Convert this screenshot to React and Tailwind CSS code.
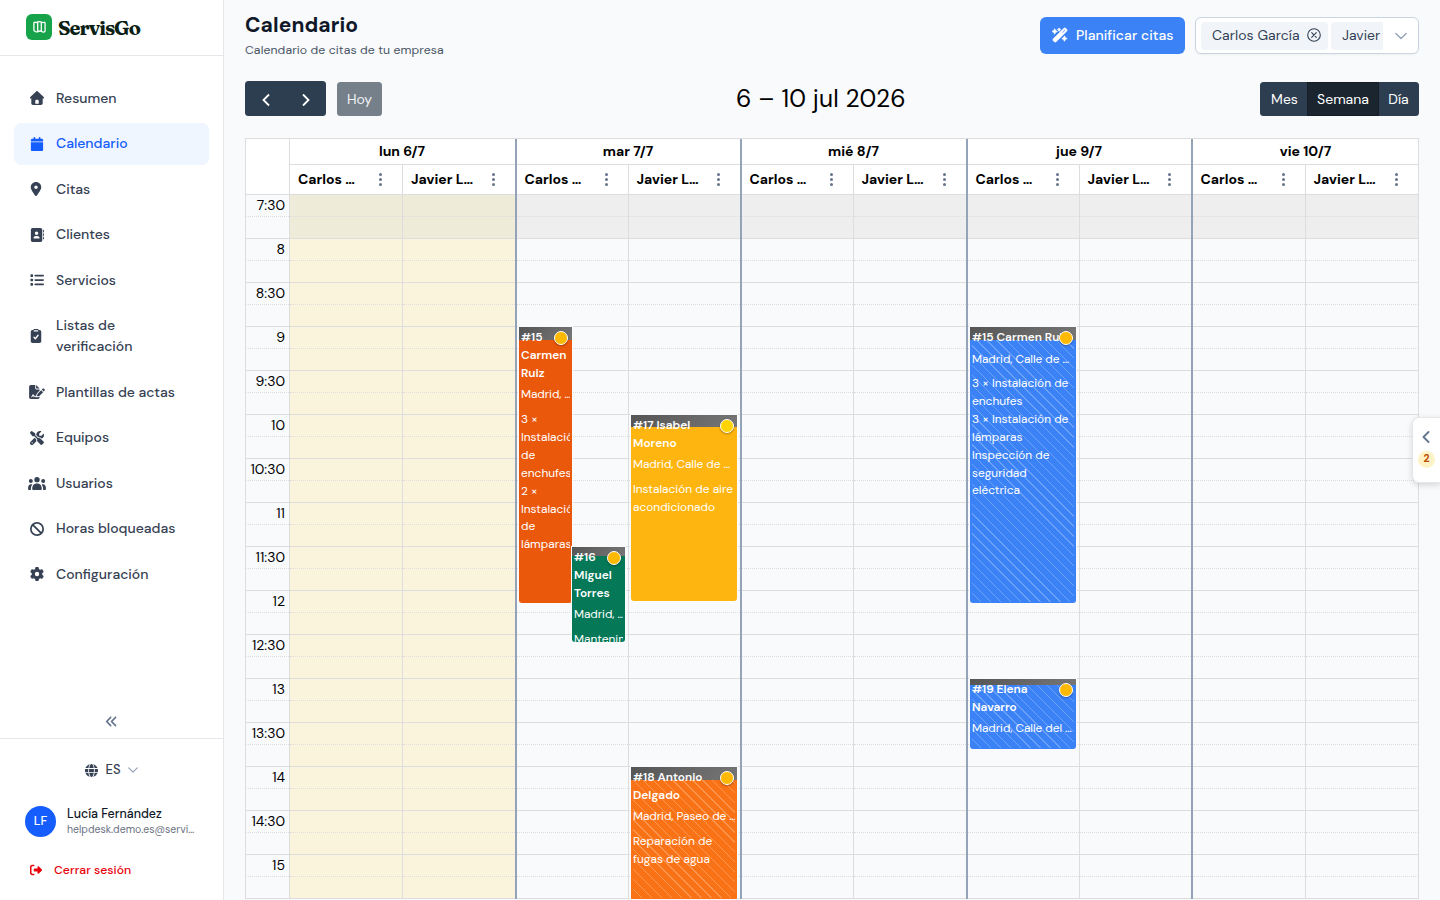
import clsx from 'clsx';
import {
    FaAddressBook, FaAnglesLeft, FaBan, FaCalendar, FaFileSignature, FaGear, FaGlobe,
    FaList, FaLocationDot, FaRightFromBracket, FaScrewdriverWrench, FaWandMagicSparkles,
} from 'react-icons/fa6';

const NAV = [
    { label: 'Resumen', icon: HouseIcon, size: 'h-3.5 w-3.5' },
    { label: 'Calendario', icon: FaCalendar, size: 'h-3.5 w-3.5', active: true },
    { label: 'Citas', icon: FaLocationDot, size: 'h-3.5 w-3.5 -translate-x-px' },
    { label: 'Clientes', icon: FaAddressBook, size: 'h-3.5 w-3.5' },
    { label: 'Servicios', icon: FaList, size: 'h-3.5 w-3.5' },
    { label: 'Listas de verificación', icon: ClipboardIcon, size: 'h-3.5 w-3.5 -translate-x-px' },
    { label: 'Plantillas de actas', icon: FaFileSignature, size: 'h-3.5 w-4' },
    { label: 'Equipos', icon: FaScrewdriverWrench, size: 'h-3.5 w-3.5' },
    { label: 'Usuarios', icon: UsersIcon, size: 'h-[13px] w-[18px]' },
    { label: 'Horas bloqueadas', icon: FaBan, size: 'h-3.5 w-3.5' },
    { label: 'Configuración', icon: FaGear, size: 'h-3.5 w-3.5' },
];

const TIMES = ['7:30', '8', '8:30', '9', '9:30', '10', '10:30', '11', '11:30', '12', '12:30', '13', '13:30', '14', '14:30', '15'];

const DAYS = [
    { label: 'lun 6/7', width: 'w-[225px]', first: 'w-[113px]', blocked: true, events: [[], []] },
    {
        label: 'mar 7/7', width: 'w-[225px]', first: 'w-[112px]', divider: true,
        events: [
            [
                {
                    box: 'left-[2px] top-[133px] h-[276px] w-[53px] bg-[#ea580c]', bar: 'h-[13px]', dot: 'right-1 bg-[#ffb900]',
                    title: ['#15', 'Carmen', 'Ruiz'], place: 'Madrid, …',
                    lines: ['3 ×', 'Instalación', 'de', 'enchufes', '2 ×', 'Instalación', 'de', 'lámparas'],
                },
                {
                    box: 'left-[55px] top-[353px] h-[95px] w-[53px] bg-[#047857]', bar: 'h-[9px]', dot: 'right-1 bg-[#ffb900]',
                    title: ['#16', 'Miguel', 'Torres'], place: 'Madrid, …', lines: ['Mantenimiento'],
                },
            ],
            [
                {
                    box: 'left-[2px] top-[221px] h-[186px] w-[106px] bg-[#ffb50f]', bar: 'h-[12px]', dot: 'right-[3px] bg-[#ffd400]',
                    title: ['#17 Isabel', 'Moreno'], place: 'Madrid, Calle de …', lines: ['Instalación de aire', 'acondicionado'],
                },
                {
                    box: 'left-[2px] top-[573px] h-[132px] w-[106px] rounded-b-none bg-[#f97316]', bar: 'h-[13px]', dot: 'right-[3px] bg-[#ffb900]', striped: true,
                    title: ['#18 Antonio', 'Delgado'], place: 'Madrid, Paseo de …', lines: ['Reparación de', 'fugas de agua'],
                },
            ],
        ],
    },
    { label: 'mié 8/7', width: 'w-[226px]', first: 'w-[112px]', divider: true, events: [[], []] },
    {
        label: 'jue 9/7', width: 'w-[225px]', first: 'w-[112px]', divider: true,
        events: [
            [
                {
                    box: 'left-[2px] top-[133px] h-[276px] w-[106px] bg-[#3b82f6]', bar: 'h-[13px]', dot: 'right-[3px] bg-[#ffb900]', striped: true,
                    title: ['#15 Carmen Ruiz'], place: 'Madrid, Calle de …',
                    lines: ['3 × Instalación de', 'enchufes', '3 × Instalación de', 'lámparas', 'Inspección de', 'seguridad', 'eléctrica'],
                },
                {
                    box: 'left-[2px] top-[485px] h-[70px] w-[106px] bg-[#3b82f6]', bar: 'h-[6px]', dot: 'right-[3px] bg-[#ffb900]', striped: true,
                    title: ['#19 Elena', 'Navarro'], place: 'Madrid, Calle del …', lines: [],
                },
            ],
            [],
        ],
    },
    { label: 'vie 10/7', width: 'w-[228px]', first: 'w-[113px]', divider: true, last: true, events: [[], []] },
];

const SLOTS = Array.from({ length: 33 }, (_, i) => i);

export default function App() {
    return (
        <div className="relative flex h-[900px] w-[1440px] overflow-hidden bg-[#f8fafc] font-['DM_Sans','Inter',sans-serif] text-sm text-black">
            <Sidebar />
            <main className="flex min-w-0 flex-1 flex-col pl-[21px] pr-[21px]">
                <PageHeader />
                <Toolbar />
                <CalendarGrid />
            </main>
            <SideTab />
        </div>
    );
}

function Sidebar() {
    return (
        <aside className="flex w-56 shrink-0 flex-col border-r border-[#e5e7eb] bg-white">
            {/* brand */}
            <div className="flex h-14 shrink-0 items-center gap-1.5 border-b border-[#e5e7eb] pb-px pl-[26px]">
                <span className="grid h-[26px] w-[26px] place-items-center rounded-[6px] bg-[#16a34a]">
                    <svg viewBox="0 0 13 12" fill="none" stroke="white" strokeWidth="1.3" strokeLinecap="round" strokeLinejoin="round" className="h-3 w-[13px]">
                        <path d="M.9 2.2 Q.9 1.2 1.8 1.2 Q3.3 1.9 4.7 1 Q6.5 .3 8.3 1.2 Q9.9 1.9 11.2 1.2 Q12.1 1.2 12.1 2.2 V9.8 Q12.1 10.9 11 11 Q9.7 11.2 8.3 10.2 Q6.5 9.6 4.7 10.7 Q3.2 11.3 1.8 10.3 Q.9 9.8 .9 8.8 Z" />
                        <path d="M4.7 1 V10.7 M8.3 1.2 V10.2" />
                    </svg>
                </span>
                <span className="pt-px font-['Fraunces','Liberation_Serif',serif] text-[20px] font-bold leading-none tracking-[-1px] text-[#0b1f14]">ServisGo</span>
            </div>

            <nav className="flex flex-1 flex-col gap-1 px-3.5 pt-[21.5px]">
                {NAV.map(({ label, icon: Icon, size, active }) => (
                    <a
                        key={label}
                        className={clsx(
                            'flex items-center gap-2.5 rounded-[7px] py-[10.25px] pl-3.5 pr-6 font-medium leading-[21px]',
                            active ? 'bg-[#eff6ff] text-[#155dfc]' : 'text-[#364153]',
                        )}
                    >
                        <span className="flex w-[18px] shrink-0 justify-center">
                            <Icon className={clsx('shrink-0', size)} />
                        </span>
                        <span className={clsx(label.startsWith('Listas') && 'w-[90px]')}>{label}</span>
                    </a>
                ))}
            </nav>

            <div className="flex justify-center pb-2.5 pr-px text-[#62748e]">
                <FaAnglesLeft className="h-[13px] w-[13px]" />
            </div>

            <div className="flex h-[162px] shrink-0 flex-col border-t border-[#e5e7eb] px-[25px]">
                <div className="mt-[21px] flex items-center justify-center gap-[7px] text-[#364153]">
                    <FaGlobe className="h-[13px] w-[13px]" />
                    <span className="text-[13px] font-medium leading-5">ES</span>
                    <ChevronDown className="h-2.5 w-2.5 text-[#90a1b9]" />
                </div>
                <div className="mt-[26px] flex items-center gap-[11px]">
                    <span className="grid h-[31px] w-[31px] shrink-0 place-items-center rounded-full bg-[#155dfc] text-[12.5px] font-medium text-white">LF</span>
                    <div className="min-w-0">
                        <p className="text-[12.4px] font-medium leading-4 text-[#101828]">Lucía Fernández</p>
                        <p className="w-[131px] truncate text-[10.5px] leading-[15px] text-[#6a7282]">helpdesk.demo.es@servi…</p>
                    </div>
                </div>
                <div className="mt-[23px] flex items-center gap-3 pl-[5px] text-[#e7000b]">
                    <FaRightFromBracket className="h-3 w-3" />
                    <span className="text-[12.25px] font-medium leading-5">Cerrar sesión</span>
                </div>
            </div>
        </aside>
    );
}

function PageHeader() {
    return (
        <header className="flex h-[81px] shrink-0 items-start justify-between">
            <div className="pt-[11px]">
                <h1 className="text-[21px] font-bold leading-7 tracking-[0.1px] text-[#101828]">Calendario</h1>
                <p className="mt-[2px] text-[12.25px] leading-[18px] tracking-[0.09px] text-[#4a5565]">Calendario de citas de tu empresa</p>
            </div>
            <div className="flex gap-2.5 pt-[17px]">
                <button type="button" className="flex h-[37px] w-[145px] items-center gap-2 rounded-[6px] bg-[#3b82f6] pb-px pl-3 font-medium tracking-[0.05px] text-white">
                    <FaWandMagicSparkles className="h-4 w-4" stroke="currentColor" strokeWidth="22" />
                    Planificar citas
                </button>
                <div className="flex h-[37px] w-[224px] items-center rounded-[6px] border border-[#cbd5e1] bg-white pl-[5px] shadow-[0_1px_2px_rgba(18,18,23,0.05)]">
                    <div className="flex w-[182px] gap-[3px] overflow-hidden">
                        <span className="flex h-7 w-[127px] shrink-0 items-center gap-[7px] rounded-[4px] bg-[#f1f5f9] pb-px pl-[11px] tracking-[0.06px] text-[#334155]">
                            Carlos García
                            <svg viewBox="0 0 14 14" fill="none" stroke="currentColor" strokeWidth="1.1" strokeLinecap="round" className="h-3.5 w-3.5">
                                <circle cx="7" cy="7" r="6.3" />
                                <path d="M4.7 4.7l4.6 4.6M9.3 4.7L4.7 9.3" />
                            </svg>
                        </span>
                        <span className="flex h-7 w-[52px] shrink-0 items-center rounded-l-[4px] bg-[#f1f5f9] pb-px pl-[11px] text-[#334155]">
                            Javier
                        </span>
                    </div>
                    <ChevronDown className="ml-3 h-3 w-3 text-[#94a3b8]" />
                </div>
            </div>
        </header>
    );
}

function Toolbar() {
    return (
        <div className="flex h-[35px] shrink-0 items-end">
            <div className="flex h-[35px] w-[81px] items-center justify-around rounded-[3.5px] bg-[#2c3e50] pt-[3px] text-white">
                <svg viewBox="0 0 8 14" fill="none" stroke="currentColor" strokeWidth="1.8" className="ml-px h-3.5 w-2">
                    <path d="M7 1.5L1.5 7 7 12.5" />
                </svg>
                <svg viewBox="0 0 8 14" fill="none" stroke="currentColor" strokeWidth="1.8" className="h-3.5 w-2">
                    <path d="M1 1.5L6.5 7 1 12.5" />
                </svg>
            </div>
            <button type="button" className="ml-[11px] h-[34px] w-[45px] rounded-[3.5px] bg-[#75808b] pb-px text-[#f1f3f5]">Hoy</button>
            <h2 className="flex-1 pl-px text-center text-[24.5px] leading-[34px] tracking-[0.15px]">6 – 10 jul 2026</h2>
            <div className="ml-[1px] flex h-[34px] overflow-hidden rounded-[3.5px] bg-[#2c3e50] text-white">
                <button type="button" className="w-[47px] pb-px pl-0.5">Mes</button>
                <button type="button" className="w-[72px] border border-[#151e27] bg-[#1a252f] pb-px">Semana</button>
                <button type="button" className="w-10 pb-px pr-px">Día</button>
            </div>
        </div>
    );
}

function CalendarGrid() {
    return (
        <section className="mt-[22px] flex h-[761px] shrink-0 overflow-hidden border-l border-t border-[#ddd]">
            {/* time axis */}
            <div className="flex w-11 shrink-0 flex-col border-r border-[#ddd]">
                <div className="h-[55px] shrink-0 bg-white" />
                {SLOTS.map((i) => (
                    <div key={i} className={clsx('h-[22px] shrink-0 border-t border-[#ddd] pr-1 text-right leading-[21px]', i % 2 ? 'border-dotted' : 'border-solid')}>
                        {i % 2 === 0 && TIMES[i / 2]}
                    </div>
                ))}
            </div>
            {DAYS.map((day) => (
                <DayColumn key={day.label} day={day} />
            ))}
        </section>
    );
}

function DayColumn({ day }) {
    return (
        <div
            className={clsx(
                'flex shrink-0 flex-col',
                day.width,
                day.divider && 'border-l-2 border-l-[#94a3b8]',
                day.last && 'border-r border-r-[#ddd]',
            )}
        >
            <div className={clsx('h-[26px] shrink-0 border-b border-[#ddd] bg-white text-center font-bold leading-[25px]', !day.last && 'pr-px')}>{day.label}</div>
            <div className="flex flex-1">
                {['Carlos …', 'Javier L…'].map((name, idx) => (
                    <div key={name} className={clsx('relative', idx === 0 ? clsx(day.first, 'shrink-0 border-r border-[#ddd]') : 'flex-1')}>
                        <div className={clsx('flex h-[29px] items-center justify-between bg-white pb-px pr-5 font-bold', day.divider ? 'pl-[7.5px]' : 'pl-2')}>
                            <span>{name}</span>
                            <svg viewBox="0 0 3 13" fill="#64748b" className="h-[13px] w-[3px]">
                                <circle cx="1.5" cy="1.6" r="1.5" />
                                <circle cx="1.5" cy="6.5" r="1.5" />
                                <circle cx="1.5" cy="11.4" r="1.5" />
                            </svg>
                        </div>
                        <div className="relative">
                            {SLOTS.map((i) => (
                                <div
                                    key={i}
                                    className={clsx(
                                        'h-[22px] border-t border-[#ddd]',
                                        i % 2 ? 'border-dotted' : 'border-solid',
                                        i < 2 && (day.blocked ? 'bg-[#efebd9]' : 'bg-[#eeeeee]'),
                                        i >= 2 && day.blocked && 'bg-[#fbf4dc]',
                                    )}
                                />
                            ))}
                            {day.events[idx].map((event) => (
                                <CalendarEvent key={event.title[0]} event={event} />
                            ))}
                        </div>
                    </div>
                ))}
            </div>
        </div>
    );
}

function CalendarEvent({ event }) {
    const oneLine = event.title.length === 1;

    return (
        <div className={clsx('absolute overflow-hidden rounded-b-[3px] text-[11.9px] leading-[18px] text-white shadow-[0_0_0_1px_#f8fafc]', event.box)}>
            {event.striped && (
                <div className="absolute inset-x-[2px] bottom-px top-px bg-[repeating-linear-gradient(45deg,transparent_0,transparent_6px,rgba(255,255,255,0.25)_6px,rgba(255,255,255,0.25)_7px)]" />
            )}
            {/* travel time */}
            <div className={clsx('absolute inset-x-0 top-0 bg-linear-135 from-[#555555] to-[#777777]', event.bar)} />
            <div className="relative mx-[2px] overflow-hidden whitespace-nowrap pt-px">
                {event.title.map((line) => (
                    <p key={line} className="font-semibold">{line}</p>
                ))}
                <p className={clsx('tracking-[-0.06px]', oneLine ? 'mt-1' : 'mt-[3px]')}>{event.place}</p>
                <div className={clsx('leading-[17.9px]', oneLine ? 'mt-[7px]' : 'mt-2')}>
                    {event.lines.map((line, i) => (
                        <p key={i}>{line}</p>
                    ))}
                </div>
            </div>
            <span className={clsx('absolute top-1 h-3.5 w-3.5 rounded-full border border-white shadow-[0_1px_2px_rgba(0,0,0,0.3)]', event.dot)} />
        </div>
    );
}

function SideTab() {
    return (
        <div className="absolute right-0 top-[417px] flex h-[66px] w-7 flex-col items-center gap-2 rounded-l-[7px] border border-r-0 border-[#e5e7eb] bg-white pt-[13px] shadow-[0_2px_6px_rgba(0,0,0,0.15)]">
            <svg viewBox="0 0 8 12" fill="none" stroke="#62748e" strokeWidth="1.8" strokeLinecap="round" strokeLinejoin="round" className="mr-px h-3 w-2">
                <path d="M6.5 1L1.5 6l5 5" />
            </svg>
            <span className="grid h-[17px] w-[17px] place-items-center rounded-full bg-[#fef3c6] text-[10.5px] font-bold leading-none text-[#bb4d00]">2</span>
        </div>
    );
}

function ChevronDown({ className }) {
    return (
        <svg viewBox="0 0 14 14" fill="none" stroke="currentColor" strokeWidth="1.6" strokeLinecap="round" strokeLinejoin="round" className={className}>
            <path d="M1 4l6 6 6-6" />
        </svg>
    );
}

function HouseIcon({ className }) {
    return (
        <svg viewBox="0 0 512 512" fill="currentColor" className={className}>
            <path d="M277.8 8.6c-12.3-11.4-31.3-11.4-43.5 0l-224 208c-9.6 9-12.8 22.9-8 35.1S18.8 272 32 272l16 0 0 176c0 35.3 28.7 64 64 64l288 0c35.3 0 64-28.7 64-64l0-176 16 0c13.2 0 25-8.1 29.8-20.3s1.6-26.2-8-35.1l-224-208zM240 320l32 0c26.5 0 48 21.5 48 48l0 96-128 0 0-96c0-26.5 21.5-48 48-48z" />
        </svg>
    );
}

function UsersIcon({ className }) {
    return (
        <svg viewBox="0 0 54 39" fill="currentColor" className={className}>
            <circle cx="27" cy="8" r="8" />
            <circle cx="8.5" cy="12" r="6" />
            <circle cx="45.5" cy="12" r="6" />
            <path d="M12.5 36c0-10 5-16.5 14.5-16.5S41.5 26 41.5 36c0 2-1 3-3 3h-23c-2 0-3-1-3-3z" />
            <path d="M0 36c0-9 3-14.5 9-14.5 1.5 0 3 .3 4.2 1C10 26 8.5 30.5 8.5 39H3c-2 0-3-1-3-3z" />
            <path d="M54 36c0-9-3-14.5-9-14.5-1.500 0-3 .3-4.200 1C44 26 45.500 30.500 45.500 39H51c2 0 3-1 3-3z" />
        </svg>
    );
}

function ClipboardIcon({ className }) {
    return (
        <svg viewBox="0 0 384 512" fill="none" className={className}>
            <rect y="32" width="384" height="480" rx="64" fill="currentColor" />
            <rect x="96" y="0" width="192" height="110" rx="36" fill="currentColor" />
            <path d="M130 72h124" stroke="white" strokeWidth="46" strokeLinecap="round" />
            <path d="M118 300l52 56 96-128" stroke="white" strokeWidth="48" strokeLinecap="round" strokeLinejoin="round" />
        </svg>
    );
}
